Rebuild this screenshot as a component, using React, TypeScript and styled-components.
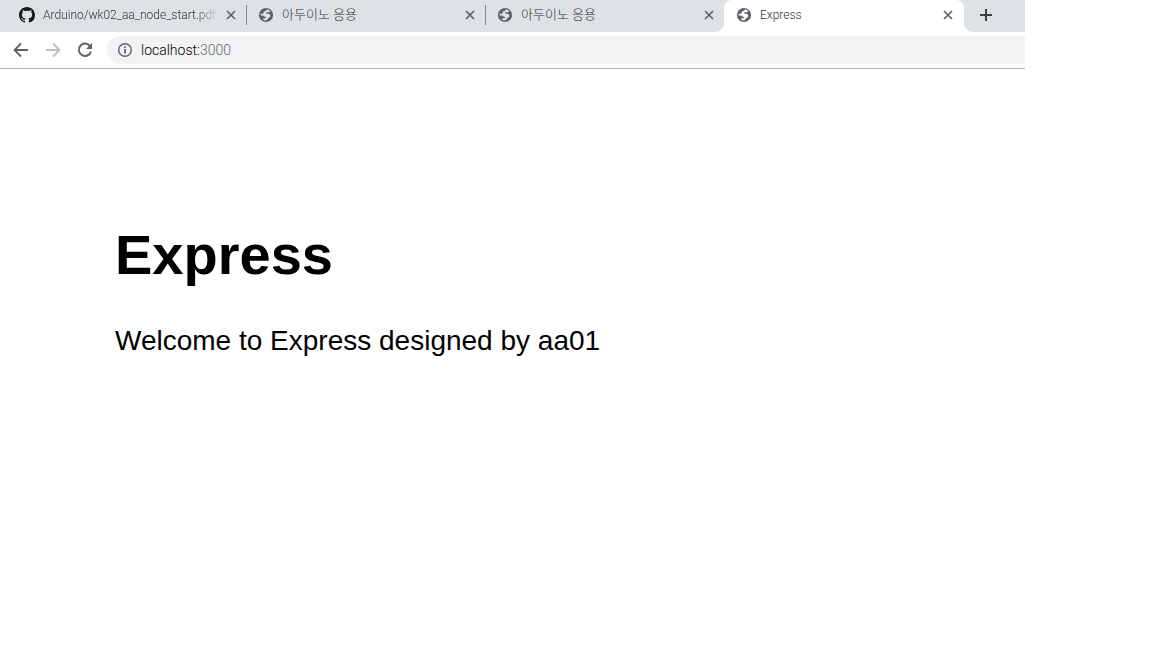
import React from 'react';
import styled, { createGlobalStyle } from 'styled-components';

const GlobalStyle = createGlobalStyle`
  * { box-sizing: border-box; }
  body { margin: 0; background: #fff; color: #000; }
  button { border: 0; padding: 0; background: none; font: inherit; cursor: pointer; }
  svg { display: block; flex: none; }
`;

const Browser = styled.header`
  margin-right: 127px;
  font-family: Roboto, 'Noto Sans CJK KR', sans-serif;
  font-weight: 300;
`;

const TabStrip = styled.nav`
  display: flex;
  height: 32px;
  padding-left: 7px;
  background: #dee1e6;
`;

const Tab = styled.div<{ $active?: boolean; $divided?: boolean }>`
  position: relative;
  display: flex;
  align-items: center;
  flex: 0 1 ${(p) => (p.$active ? 240 : 239)}px;
  min-width: 0;
  height: 32px;
  padding: 0 ${(p) => (p.$active ? 8 : 7)}px 2px 12px;
  background: ${(p) => (p.$active ? '#fff' : 'transparent')};
  border-radius: ${(p) => (p.$active ? '8px 8px 0 0' : '0')};

  &::before,
  &::after {
    content: ${(p) => (p.$active ? "''" : 'none')};
    position: absolute;
    bottom: 0;
    width: 8px;
    height: 8px;
  }
  &::before {
    right: 100%;
    background: radial-gradient(circle at 0 0, #dee1e6 7px, #fff 8px);
  }
  &::after {
    left: 100%;
    background: radial-gradient(circle at 100% 0, #dee1e6 7px, #fff 8px);
  }

  ${(p) =>
    p.$divided &&
    `&::after {
      content: '';
      left: 100%;
      top: 5px;
      width: 1px;
      height: 20px;
      background: #85888d;
    }`}
`;

const TabLink = styled.a<{ $korean?: boolean }>`
  display: flex;
  align-items: center;
  gap: 8px;
  flex: 1;
  min-width: 0;
  color: #303338;
  font-size: ${(p) => (p.$korean ? 13 : 12)}px;
  line-height: 20px;
  text-decoration: none;
`;

const TabTitle = styled.span<{ $fade?: boolean }>`
  flex: 1;
  min-width: 0;
  margin-right: 4px;
  overflow: hidden;
  white-space: nowrap;
  mask-image: ${(p) => (p.$fade ? 'linear-gradient(to left, transparent, #000 24px)' : 'none')};
`;

const CloseButton = styled.button`
  display: grid;
  place-items: center;
  flex: none;
  width: 16px;
  height: 16px;
  color: #5f6368;
`;

const NewTabButton = styled.button`
  display: grid;
  place-items: center;
  width: 28px;
  height: 30px;
  margin-left: 8px;
  color: #3c4043;
`;

const Toolbar = styled.div`
  display: flex;
  align-items: center;
  height: 37px;
  padding-left: 13px;
  border-bottom: 1px solid #b4b5b7;
`;

const ToolButton = styled.button`
  display: grid;
  place-items: center;
  width: 16px;
  height: 16px;
  margin-right: 16px;
  color: #5f6368;
  &:disabled { color: #bcbec1; }
`;

const AddressBar = styled.form`
  display: flex;
  align-items: center;
  flex: 1;
  height: 28px;
  margin-left: -2px;
  padding-left: 10px;
  gap: 8px;
  background: #f1f3f4;
  border-radius: 14px 0 0 14px;
  color: #5f6368;
`;

const Address = styled.div`
  flex: 1;
  font-size: 14px;
  line-height: 20px;
  color: #63686e;
`;

const Host = styled.span`
  color: #000;
`;

const Page = styled.main`
  padding: 148px 115px 50px;
  font-family: 'Liberation Sans', Arial, sans-serif;
`;

const Title = styled.h1`
  margin: 0;
  font-size: 56px;
  line-height: 76px;
`;

const Welcome = styled.p`
  margin: 32px 0 0;
  font-size: 28px;
  line-height: 32px;
`;

const GithubIcon = () => (
  <svg width="16" height="16" viewBox="0 0 16 16" fill="#16191d" aria-hidden="true">
    <path d="M8 0C3.58 0 0 3.58 0 8c0 3.54 2.29 6.53 5.47 7.59.4.07.55-.17.55-.38 0-.19-.01-.82-.01-1.49-2.01.37-2.53-.49-2.69-.94-.09-.23-.48-.94-.82-1.13-.28-.15-.68-.52-.01-.53.63-.01 1.08.58 1.23.82.72 1.21 1.87.87 2.33.66.07-.52.28-.87.51-1.07-1.78-.2-3.64-.89-3.64-3.95 0-.87.31-1.59.82-2.15-.08-.2-.36-1.02.08-2.12 0 0 .67-.21 2.2.82.64-.18 1.32-.27 2-.27s1.36.09 2 .27c1.53-1.04 2.2-.82 2.2-.82.44 1.1.16 1.92.08 2.12.51.56.82 1.27.82 2.15 0 3.07-1.87 3.75-3.65 3.95.29.25.54.73.54 1.48 0 1.07-.01 1.93-.01 2.2 0 .21.15.46.55.38A8.01 8.01 0 0 0 16 8c0-4.42-3.58-8-8-8z" />
  </svg>
);

const GlobeIcon = ({ land }: { land: string }) => (
  <svg width="16" height="16" viewBox="0 0 16 16" fill="none" aria-hidden="true">
    <circle cx="8" cy="8" r="7.1" fill="#5f6368" />
    <path
      d="M8.600 2.600c1.500 0 2.900.600 3.800 1.700-.6.900-1.300 1-2.200 1H8.800c-.5 0-.7.300-.7.700 0 .5.300.700.800.700h1.200c1.300 0 2.100.900 2.100 2.100 0 1.400-.8 2-1.700 2.200-.5.100-.6.400-.8 1-.3 1-1.200 1.500-2.500 1.400-.7-.1-1.300-.3-1.900-.7v-1.400h1.900c.5 0 .8-.3.800-.7 0-.5-.3-.8-.8-.9C6 9.500 5.600 8.700 4.800 8.500H2.600c-.1-.6-.1-1.200.1-1.800H5c.3 0 .5-.2.500-.5 0-1.400.6-2.300 2.100-2.300.5 0 .9-.3 1-1.300z"
      fill={land}
    />
  </svg>
);

const CloseIcon = () => (
  <svg width="10" height="10" viewBox="0 0 10 10" stroke="currentColor" strokeWidth="1.7" aria-hidden="true">
    <path d="M1 1l8 8M9 1L1 9" />
  </svg>
);

const PlusIcon = () => (
  <svg width="12" height="12" viewBox="0 0 12 12" stroke="currentColor" strokeWidth="2" aria-hidden="true">
    <path d="M6 0v12M0 6h12" />
  </svg>
);

const ArrowIcon = ({ forward }: { forward?: boolean }) => (
  <svg width="16" height="16" viewBox="0 0 16 16" fill="none" stroke="currentColor" strokeWidth="1.8" aria-hidden="true">
    <path d={forward ? 'M1 8h13M8 1.5L14.5 8 8 14.5' : 'M15 8H2M8 1.5L1.5 8 8 14.5'} />
  </svg>
);

const ReloadIcon = () => (
  <svg width="16" height="16" viewBox="0 0 16 16" aria-hidden="true">
    <path d="M13.2 4.2A6.2 6.2 0 1 0 14 9.6" fill="none" stroke="currentColor" strokeWidth="1.9" />
    <path d="M15 1v6H9z" fill="currentColor" />
  </svg>
);

const InfoIcon = () => (
  <svg width="16" height="16" viewBox="0 0 16 16" fill="none" stroke="currentColor" aria-hidden="true">
    <circle cx="8" cy="8" r="6.3" strokeWidth="1.4" />
    <path d="M8 7v4.5M8 4.3v1.7" strokeWidth="1.8" />
  </svg>
);

type TabData = { title: string; github?: boolean; korean?: boolean; active?: boolean; divided?: boolean };

const tabs: TabData[] = [
  { title: 'Arduino/wk02_aa_node_start.pdf', github: true, divided: true },
  { title: '아두이노 응용', korean: true, divided: true },
  { title: '아두이노 응용', korean: true },
  { title: 'Express', active: true },
];

export default function App() {
  return (
    <>
      <GlobalStyle />
      <Browser>
        <TabStrip aria-label="Tabs">
          {tabs.map((tab, i) => (
            <Tab key={i} $active={tab.active} $divided={tab.divided}>
              <TabLink href="#" $korean={tab.korean} aria-current={tab.active ? 'page' : undefined}>
                {tab.github ? <GithubIcon /> : <GlobeIcon land={tab.active ? '#fff' : '#dee1e6'} />}
                <TabTitle $fade={tab.github}>{tab.title}</TabTitle>
              </TabLink>
              <CloseButton type="button" aria-label={`Close ${tab.title}`}>
                <CloseIcon />
              </CloseButton>
            </Tab>
          ))}
          <NewTabButton type="button" aria-label="New tab">
            <PlusIcon />
          </NewTabButton>
        </TabStrip>
        <Toolbar>
          <ToolButton type="button" aria-label="Back"><ArrowIcon /></ToolButton>
          <ToolButton type="button" aria-label="Forward" disabled><ArrowIcon forward /></ToolButton>
          <ToolButton type="button" aria-label="Reload"><ReloadIcon /></ToolButton>
          <AddressBar>
            <InfoIcon />
            <Address role="textbox" aria-label="Address" contentEditable suppressContentEditableWarning>
              <Host>localhost:</Host>3000
            </Address>
          </AddressBar>
        </Toolbar>
      </Browser>
      <Page>
        <Title>Express</Title>
        <Welcome>Welcome to Express designed by aa01</Welcome>
      </Page>
    </>
  );
}
